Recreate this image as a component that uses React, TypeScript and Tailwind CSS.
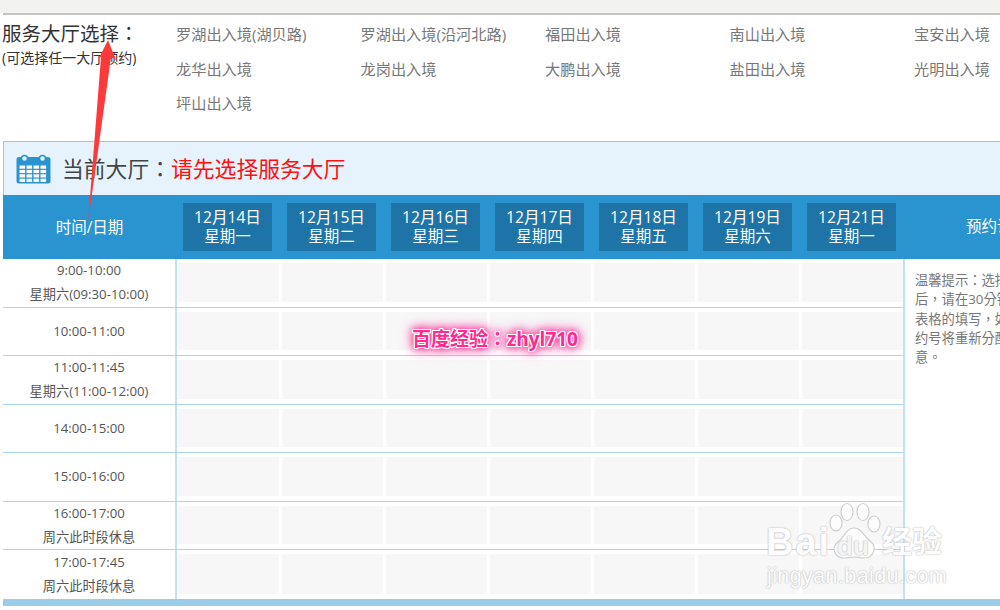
const halls = [
  "罗湖出入境(湖贝路)",
  "罗湖出入境(沿河北路)",
  "福田出入境",
  "南山出入境",
  "宝安出入境",
  "龙华出入境",
  "龙岗出入境",
  "大鹏出入境",
  "盐田出入境",
  "光明出入境",
  "坪山出入境",
];

const days = [
  { date: "12月14日", week: "星期一" },
  { date: "12月15日", week: "星期二" },
  { date: "12月16日", week: "星期三" },
  { date: "12月17日", week: "星期四" },
  { date: "12月18日", week: "星期五" },
  { date: "12月19日", week: "星期六" },
  { date: "12月21日", week: "星期一" },
];

const slots = [
  { time: "9:00-10:00", note: "星期六(09:30-10:00)" },
  { time: "10:00-11:00" },
  { time: "11:00-11:45", note: "星期六(11:00-12:00)" },
  { time: "14:00-15:00" },
  { time: "15:00-16:00" },
  { time: "16:00-17:00", note: "周六此时段休息" },
  { time: "17:00-17:45", note: "周六此时段休息" },
];

const tips = ["温馨提示：选择预约", "后，请在30分钟内完成", "表格的填写，如超时预", "约号将重新分配，请注", "意。"];

function CalendarIcon() {
  const cells = [];
  for (let r = 0; r < 4; r++) {
    for (let c = 0; c < 4; c++) {
      cells.push(<rect key={`${r}-${c}`} x={3.5 + c * 7} y={11.5 + r * 4.4} width="5.6" height="3.2" fill="#ffffff" />);
    }
  }
  return (
    <svg width="35" height="30" viewBox="0 0 35 30" className="shrink-0">
      <rect x="0.5" y="3" width="34" height="26.5" rx="2.5" fill="#2a94d0" />
      <circle cx="8.5" cy="4.5" r="3" fill="#e6f3fc" stroke="#2a94d0" strokeWidth="1.5" />
      <circle cx="26.5" cy="4.5" r="3" fill="#e6f3fc" stroke="#2a94d0" strokeWidth="1.5" />
      {cells}
    </svg>
  );
}

function Arrow() {
  return (
    <svg width="40" height="200" viewBox="0 0 40 200" className="absolute left-[85px] top-[35px]">
      <polygon points="23,5 31,25 26,22 3,188 16,22 14,23" fill="#fc3a3a" />
    </svg>
  );
}

function Colon() {
  return <span className="font-['Noto_Sans_CJK_TC',sans-serif]">：</span>;
}

function BaiduMark() {
  return (
    <div className="absolute left-[766px] top-[500px] w-[185px] h-[100px] font-['Liberation_Sans','Noto_Sans_CJK_SC',sans-serif] text-[#fdfdfd] [text-shadow:0_0_2px_#bdbdbd,0_0_1px_#bdbdbd]">
      <div className="absolute left-0 top-[20px] text-[38px] leading-[44px] font-bold tracking-[2px]">Bai</div>
      <svg width="56" height="62" viewBox="0 0 56 62" className="absolute left-[60px] top-[2px]">
        <g fill="#fdfdfd" stroke="#cfcfcf" strokeWidth="1.2">
          <ellipse cx="10" cy="21" rx="6" ry="8" />
          <ellipse cx="21" cy="10" rx="6" ry="8.5" />
          <ellipse cx="37" cy="10" rx="6" ry="8.5" />
          <ellipse cx="48" cy="22" rx="6" ry="8" />
          <path d="M28 26c8 0 10 9 17 14 6 5 3 16-7 16-4 0-7-1-10-1s-6 1-10 1c-10 0-13-11-6-16 7-5 8-14 16-14z" />
        </g>
      </svg>
      <div className="absolute left-[71px] top-[30px] text-[26px] leading-[32px] font-bold text-[#f4f4f4]">du</div>
      <div className="absolute left-[116px] top-[20px] text-[30px] leading-[44px] font-bold whitespace-nowrap">经验</div>
      <div className="absolute left-[1px] top-[60px] text-[21.5px] leading-[32px] whitespace-nowrap tracking-[0.4px]">jingyan.baidu.com</div>
    </div>
  );
}

export default function App() {
  return (
    <div className="relative w-[1000px] h-[610px] overflow-hidden bg-white text-[#555] font-['Open_Sans','Noto_Sans_CJK_SC',sans-serif]">
      <div className="h-[13px] bg-[#f2f2f0]" />
      <div className="ml-[3px] h-[2px] bg-[#c4c4c2]" />

      {/* hall picker */}
      <div className="flex h-[126px]">
        <div className="w-[176px] shrink-0 pl-[2px] pt-[3px]">
          <div className="text-[19.5px] leading-[30px] text-[#333] whitespace-nowrap">
            服务大厅选择
            <Colon />
          </div>
          <div className="text-[14px] leading-[18px] text-[#333] whitespace-nowrap">(可选择任一大厅预约)</div>
        </div>
        <div className="grid grid-cols-[184.5px_184.5px_184.5px_184.5px_184.5px] auto-rows-[34.5px] pt-[2px] text-[15.2px] leading-[34px] text-[#777] whitespace-nowrap">
          {halls.map((hall) => (
            <div key={hall}>{hall}</div>
          ))}
        </div>
      </div>

      {/* current hall */}
      <div className="ml-[3px] h-[54px] flex items-center pl-[12px] pt-[1px] bg-[#e6f3fc] border-t border-l border-[#8ccbee]">
        <CalendarIcon />
        <span className="ml-[11px] text-[21.8px] text-[#444] whitespace-nowrap">
          当前大厅
          <Colon />
        </span>
        <span className="text-[21.8px] text-[#ff0f0f] whitespace-nowrap">请先选择服务大厅</span>
      </div>

      {/* week header */}
      <div className="ml-[3px] h-[64px] flex items-center bg-[#2a94d0] text-white">
        <div className="w-[173px] shrink-0 text-center text-[15.5px] pt-[1px]">时间/日期</div>
        <div className="w-[727px] shrink-0 flex gap-[15px] pl-[7px]">
          {days.map((day) => (
            <div key={day.date} className="w-[89px] h-[48px] shrink-0 flex flex-col items-center justify-center bg-[#1e74a6] leading-[19px]">
              <span className="text-[15.6px]">{day.date}</span>
              <span className="text-[15.5px]">{day.week}</span>
            </div>
          ))}
        </div>
        <div className="pl-[63px] text-[15.5px] whitespace-nowrap">预约说明</div>
      </div>

      {/* timetable */}
      <div className="ml-[3px] h-[340px] flex">
        <div className="w-[900px] shrink-0 grid grid-rows-7">
          {slots.map((slot) => (
            <div key={slot.time} className="flex border-b border-[#a5d5f0] last:border-b-0">
              <div className="w-[174px] shrink-0 flex flex-col items-center justify-center text-[13.2px] leading-[23.5px] border-r-2 border-[#c3e1f3]">
                <span>{slot.time}</span>
                {slot.note && <span>{slot.note}</span>}
              </div>
              <div className="flex-1 grid grid-cols-7 gap-[3px] pl-[1px] pt-[4px] pb-[5px]">
                {days.map((day) => (
                  <div key={day.date} className="bg-[#f7f7f7]" />
                ))}
              </div>
            </div>
          ))}
        </div>
        <div className="flex-1 border-l-2 border-[#c3e1f3] pl-[10px] pt-[12px] text-[13.3px] leading-[19.3px] text-[#777] whitespace-nowrap font-['Open_Sans','Noto_Sans_CJK_TC',sans-serif]">
          {tips.map((line) => (
            <div key={line}>{line}</div>
          ))}
        </div>
      </div>
      <div className="ml-[3px] h-[7px] bg-[#9bcde9]" />

      <Arrow />
      <div className="absolute left-[412px] top-[323px] text-[19px] leading-[30px] font-bold text-[#ff2a8d] whitespace-nowrap [text-shadow:1px_0_0_#fff,-1px_0_0_#fff,0_1px_0_#fff,0_-1px_0_#fff,1px_1px_0_#fff,-1px_-1px_0_#fff,1px_-1px_0_#fff,-1px_1px_0_#fff,0_0_5px_#ff4fa6,0_0_7px_#ff4fa6,0_0_9px_#ff4fa6,0_0_11px_#ff4fa6,0_0_13px_#ff7fbe,0_0_15px_#ff7fbe]">
        百度经验
        <Colon />
        zhyl710
      </div>
      <BaiduMark />
    </div>
  );
}
